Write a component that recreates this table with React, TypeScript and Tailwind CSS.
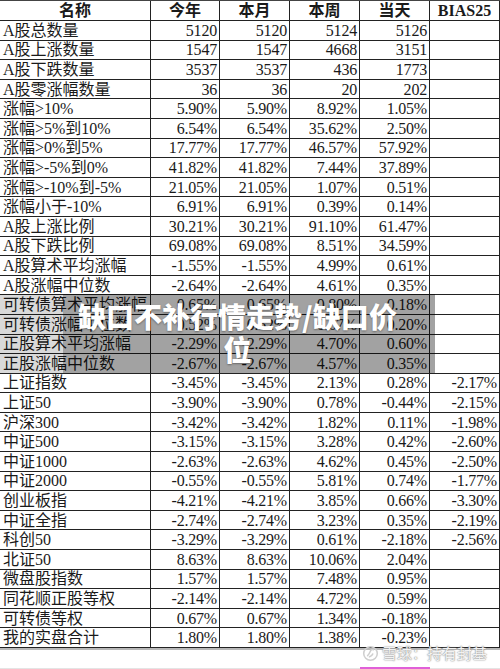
import React from "react";

const headers = ["名称", "今年", "本月", "本周", "当天", "BIAS25"];

const rows: string[][] = [
  ["A股总数量", "5120", "5120", "5124", "5126", ""],
  ["A股上涨数量", "1547", "1547", "4668", "3151", ""],
  ["A股下跌数量", "3537", "3537", "436", "1773", ""],
  ["A股零涨幅数量", "36", "36", "20", "202", ""],
  ["涨幅>10%", "5.90%", "5.90%", "8.92%", "1.05%", ""],
  ["涨幅>5%到10%", "6.54%", "6.54%", "35.62%", "2.50%", ""],
  ["涨幅>0%到5%", "17.77%", "17.77%", "46.57%", "57.92%", ""],
  ["涨幅>-5%到0%", "41.82%", "41.82%", "7.44%", "37.89%", ""],
  ["涨幅>-10%到-5%", "21.05%", "21.05%", "1.07%", "0.51%", ""],
  ["涨幅小于-10%", "6.91%", "6.91%", "0.39%", "0.14%", ""],
  ["A股上涨比例", "30.21%", "30.21%", "91.10%", "61.47%", ""],
  ["A股下跌比例", "69.08%", "69.08%", "8.51%", "34.59%", ""],
  ["A股算术平均涨幅", "-1.55%", "-1.55%", "4.99%", "0.61%", ""],
  ["A股涨幅中位数", "-2.64%", "-2.64%", "4.61%", "0.35%", ""],
  ["可转债算术平均涨幅", "0.65%", "0.65%", "0.80%", "0.18%", ""],
  ["可转债涨幅中位数", "0.52%", "0.52%", "0.67%", "0.20%", ""],
  ["正股算术平均涨幅", "-2.29%", "-2.29%", "4.70%", "0.60%", ""],
  ["正股涨幅中位数", "-2.67%", "-2.67%", "4.57%", "0.35%", ""],
  ["上证指数", "-3.45%", "-3.45%", "2.13%", "0.28%", "-2.17%"],
  ["上证50", "-3.90%", "-3.90%", "0.78%", "-0.44%", "-2.15%"],
  ["沪深300", "-3.42%", "-3.42%", "1.82%", "0.11%", "-1.98%"],
  ["中证500", "-3.15%", "-3.15%", "3.28%", "0.42%", "-2.60%"],
  ["中证1000", "-2.63%", "-2.63%", "4.62%", "0.45%", "-2.50%"],
  ["中证2000", "-0.55%", "-0.55%", "5.81%", "0.74%", "-1.77%"],
  ["创业板指", "-4.21%", "-4.21%", "3.85%", "0.66%", "-3.30%"],
  ["中证全指", "-2.74%", "-2.74%", "3.23%", "0.35%", "-2.19%"],
  ["科创50", "-3.29%", "-3.29%", "0.61%", "-2.18%", "-2.56%"],
  ["北证50", "8.63%", "8.63%", "10.06%", "2.04%", ""],
  ["微盘股指数", "1.57%", "1.57%", "7.48%", "0.95%", ""],
  ["同花顺正股等权", "-2.14%", "-2.14%", "4.72%", "0.59%", ""],
  ["可转债等权", "0.67%", "0.67%", "1.34%", "-0.18%", ""],
  ["我的实盘合计", "1.80%", "1.80%", "1.38%", "-0.23%", ""],
];

const widths = ["w-[151px]", "w-[69px]", "w-[70px]", "w-[70px]", "w-[70px]", "w-[70px]"];

export default function App() {
  return (
    <div
      className="relative w-[500px] h-[669px] overflow-hidden bg-white text-[#1a1a1a]"
      style={{ fontFamily: '"Liberation Serif", "Noto Sans CJK SC", serif' }}
    >
      <div className="flex flex-col border-t border-[#444]">
        {/* header */}
        <div className="flex h-[20px] border-b border-[#222]">
          {headers.map((h, i) => (
            <div
              key={h}
              className={`${widths[i]} shrink-0 border-r border-[#222] flex items-center justify-center text-[16px] leading-[19px] font-bold`}
            >
              {h}
            </div>
          ))}
        </div>
        {rows.map((r) => (
          <div key={r[0]} className="flex h-[19.6px] border-b border-[#222]">
            {r.map((c, i) => (
              <div
                key={i}
                className={`${widths[i]} shrink-0 border-r border-[#222] flex items-center text-[16px] leading-[19px] whitespace-nowrap ${
                  i === 0 ? "justify-start pl-[3px]" : "justify-end pr-[2px] tracking-[-0.2px]"
                }`}
              >
                {c}
              </div>
            ))}
          </div>
        ))}
        <div className="h-[2px] bg-[#b8b8b8]" />
      </div>

      {/* title overlay */}
      <div className="absolute left-0 top-[294px] w-[435px] h-[79px] flex bg-black/15">
        <div className="w-[63px] shrink-0" />
        <div className="flex-1 bg-black/25" />
      </div>
      <div
        className="absolute left-[40px] top-[295px] w-[395px] h-[76px] flex flex-col items-center justify-center text-white font-black text-[28px] leading-[33px] [text-shadow:0_1px_2px_rgba(0,0,0,0.35)]"
        style={{ fontFamily: '"Noto Sans CJK SC", sans-serif' }}
      >
        <div>缺口不补行情走势/缺口价</div>
        <div>位</div>
      </div>

      {/* watermark */}
      <div
        className="absolute left-[362px] top-[642px] flex items-center gap-[3px] text-[15px] text-[#f2f2f2] [text-shadow:0_0_1px_#888,0_0_2px_#999]"
        style={{ fontFamily: '"Noto Sans CJK SC", sans-serif' }}
      >
        <svg width="17" height="17" viewBox="0 0 20 20" fill="none" stroke="#cfcfcf" strokeWidth="1.8">
          <circle cx="10" cy="10" r="8" />
          <path d="M6 13c2-1 3-4 4-6s3-2 4-1" />
          <path d="M8 14c2 0 4-2 5-4" />
        </svg>
        <span>雪球：持有封基</span>
      </div>

      {/* bottom strip */}
      <div className="absolute left-0 bottom-0 w-[500px] h-[1px] bg-[#e4e4e4]" />
      <div className="absolute left-[360px] bottom-0 w-[70px] h-[2px] bg-[#e060d8]" />
    </div>
  );
}
